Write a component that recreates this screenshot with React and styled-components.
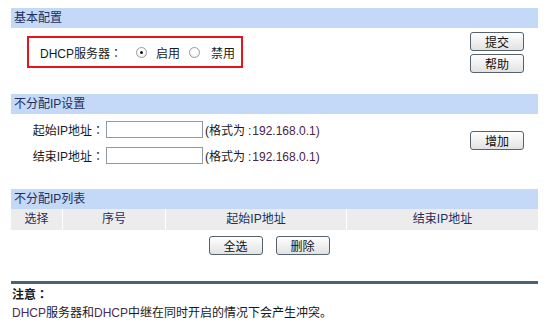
import React from "react";
import styled, { createGlobalStyle } from "styled-components";

const Global = createGlobalStyle`
  html, body { margin: 0; padding: 0; background: #ffffff; }
  body {
    font-family: "Liberation Sans", Arial, "Noto Sans CJK SC", sans-serif;
    font-size: 12px;
    color: #1a1a1a;
  }
`;

const Page = styled.div`
  width: 527px;
  padding: 8px 0 0 11px;
`;

const Header = styled.div`
  height: 20px;
  line-height: 20px;
  background: #c3d9f7;
  color: #1f2f5e;
  padding-left: 3px;
  font-size: 12px;
`;

const Colon = styled.span`
  font-family: "Noto Sans CJK TC", "Noto Sans CJK SC", sans-serif;
`;

const SmallColon = styled.span`
  margin: 0 1px 0 3px;
`;

const BasicBody = styled.div`
  height: 66px;
  display: flex;
  justify-content: space-between;
  align-items: flex-start;
`;

const RedBox = styled.div`
  margin: 8px 0 0 16px;
  width: 201px;
  height: 28px;
  border: 2px solid #e8141c;
  display: flex;
  align-items: center;
  padding-left: 11px;
  box-sizing: content-box;
`;

const RedLabel = styled.span`
  width: 96px;
  white-space: nowrap;
`;

const RadioWrap = styled.label`
  display: inline-flex;
  align-items: center;
  margin-right: ${(p) => p.$gap || 0}px;
`;

const RadioDot = styled.span`
  width: 9px;
  height: 9px;
  border-radius: 50%;
  border: 1px solid #9a9a9a;
  background: radial-gradient(circle at 50% 40%, #ffffff 40%, #e4e4e4 100%);
  display: inline-flex;
  align-items: center;
  justify-content: center;
  margin-right: ${(p) => p.$space}px;
  &::after {
    content: "";
    width: 3px;
    height: 3px;
    border-radius: 50%;
    background: ${(p) => (p.$checked ? "#111" : "transparent")};
  }
`;

const ButtonCol = styled.div`
  display: flex;
  flex-direction: column;
  gap: 3px;
  margin: 4px 14px 0 0;
`;

const Btn = styled.button`
  width: 54px;
  height: 19px;
  padding: 0;
  border: 1px solid #56626e;
  border-radius: 3px;
  background: linear-gradient(#fefefe, #f0f0f0 50%, #e2e2e2);
  font-family: "Noto Sans CJK SC", "Liberation Sans", sans-serif;
  font-size: 12px;
  line-height: 17px;
  color: #111;
  box-sizing: border-box;
`;

const IpBody = styled.div`
  height: 75px;
  display: flex;
  justify-content: space-between;
  align-items: flex-start;
`;

const Rows = styled.div`
  display: flex;
  flex-direction: column;
  gap: 8px;
  padding-top: 6px;
`;

const Row = styled.div`
  display: flex;
  align-items: center;
  height: 18px;
`;

const Label = styled.span`
  width: 93px;
  margin-right: 2px;
  text-align: right;
  white-space: nowrap;
`;

const Input = styled.input`
  width: 97px;
  height: 17px;
  margin: 0 2px 0 0;
  padding: 0;
  border: 1px solid #8d9aa6;
  box-sizing: border-box;
  background: #fff;
`;

const Hint = styled.span`
  color: #1a1a1a;
  white-space: nowrap;
`;

const Ip = styled.span`
  color: #4a2444;
`;

const Dhcp = styled.span`
  color: #4d2a5a;
`;

const AddWrap = styled.div`
  margin: 17px 14px 0 0;
`;

const Table = styled.div`
  display: grid;
  grid-template-columns: 51px 103px 181px 192px;
  height: 21px;
`;

const Th = styled.div`
  background: #ececec;
  color: #1f2f5e;
  text-align: center;
  line-height: 21px;
  border-left: ${(p) => (p.$first ? "none" : "1px solid #ffffff")};
`;

const TableButtons = styled.div`
  display: flex;
  justify-content: center;
  gap: 13px;
  padding: 6px 11px 0 0;
  height: 51px;
  box-sizing: border-box;
`;

const Divider = styled.div`
  height: 3px;
  background: #4b6274;
`;

const NoteTitle = styled.div`
  font-weight: bold;
  margin-top: 1px;
  line-height: 18px;
  padding-left: 1px;
`;

const NoteText = styled.div`
  line-height: 18px;
  padding-left: 1px;
`;

function Radio({ checked, children, gap, space }) {
  return (
    <RadioWrap $gap={gap}>
      <RadioDot $checked={checked} $space={space} />
      {children}
    </RadioWrap>
  );
}

export default function App() {
  return (
    <>
      <Global />
      <Page>
        <Header>基本配置</Header>
        <BasicBody>
          <RedBox>
            <RedLabel>
              DHCP服务器<Colon>：</Colon>
            </RedLabel>
            <Radio checked gap={9} space={9}>启用</Radio>
            <Radio space={11}>禁用</Radio>
          </RedBox>
          <ButtonCol>
            <Btn>提交</Btn>
            <Btn>帮助</Btn>
          </ButtonCol>
        </BasicBody>

        <Header>不分配IP设置</Header>
        <IpBody>
          <Rows>
            <Row>
              <Label>
                起始IP地址<Colon>：</Colon>
              </Label>
              <Input />
              <Hint>
                (格式为<SmallColon>:</SmallColon>
                <Ip>192.168.0.1)</Ip>
              </Hint>
            </Row>
            <Row>
              <Label>
                结束IP地址<Colon>：</Colon>
              </Label>
              <Input />
              <Hint>
                (格式为<SmallColon>:</SmallColon>
                <Ip>192.168.0.1)</Ip>
              </Hint>
            </Row>
          </Rows>
          <AddWrap>
            <Btn>增加</Btn>
          </AddWrap>
        </IpBody>

        <Header>不分配IP列表</Header>
        <Table>
          <Th $first>选择</Th>
          <Th>序号</Th>
          <Th>起始IP地址</Th>
          <Th>结束IP地址</Th>
        </Table>
        <TableButtons>
          <Btn>全选</Btn>
          <Btn>删除</Btn>
        </TableButtons>

        <Divider />
        <NoteTitle>
          注意<Colon>：</Colon>
        </NoteTitle>
        <NoteText>
          <Dhcp>DHCP</Dhcp>服务器和<Dhcp>DHCP</Dhcp>中继在同时开启的情况下会产生冲突。
        </NoteText>
      </Page>
    </>
  );
}
